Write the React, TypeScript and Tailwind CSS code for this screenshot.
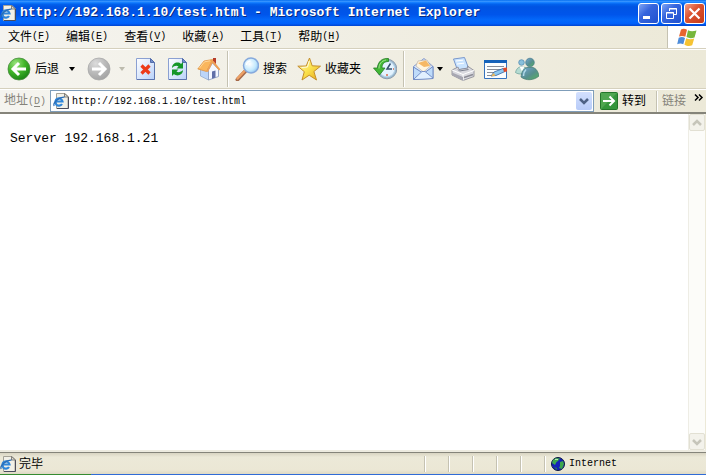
import type { ReactNode } from "react";

const menuItems = [
  { label: "文件", accessKey: "F" },
  { label: "编辑", accessKey: "E" },
  { label: "查看", accessKey: "V" },
  { label: "收藏", accessKey: "A" },
  { label: "工具", accessKey: "T" },
  { label: "帮助", accessKey: "H" },
];

const pageUrl = "http://192.168.1.10/test.html";

function Latin({ children }: { children: ReactNode }) {
  return <span className="font-['Liberation_Mono',monospace] text-[10px]">{children}</span>;
}

function Icon({ children, className = "size-6" }: { children: ReactNode; className?: string }) {
  return (
    <svg viewBox="0 0 24 24" className={`shrink-0 ${className}`} aria-hidden="true">
      {children}
    </svg>
  );
}

function PageIcon() {
  return (
    <svg viewBox="0 0 16 16" className="size-4 shrink-0" aria-hidden="true">
      <path d="M3.500.5h8.500l3 3v12h-11.500z" fill="#f1f0e8" stroke="#a5a297" />
      <path d="M15.500 4v11.500H4" fill="none" stroke="#4b4c5c" />
      <path d="M11.500.5v3.500h4z" fill="#dedbd0" stroke="#6c6a66" strokeWidth=".8" />
      <path d="M3 8.500h6.500A3.600 3.600 0 1 0 9 11" fill="none" stroke="#2f86da" strokeWidth="2.200" />
      <path d="M1.200 13C-.5 10.500 5.500 3.800 11.500 4.200" fill="none" stroke="#2b6cb4" strokeWidth="1.200" />
    </svg>
  );
}

function ArrowIcon({ disabled = false }: { disabled?: boolean }) {
  const id = disabled ? "forward-fill" : "back-fill";
  return (
    <Icon>
      <defs>
        <radialGradient id={id} cx=".35" cy=".25" r=".8">
          <stop offset="0" stopColor={disabled ? "#dcdcdc" : "#9be37f"} />
          <stop offset=".5" stopColor={disabled ? "#bcbcbc" : "#43b62b"} />
          <stop offset="1" stopColor={disabled ? "#a2a2a2" : "#188313"} />
        </radialGradient>
      </defs>
      <circle cx="12" cy="12" r="11" fill={`url(#${id})`} stroke={disabled ? "#aaa" : "#4a8c40"} strokeWidth=".8" />
      <path
        d={disabled ? "M5 12H17.500M12 6l6 6-6 6" : "M19 12H6.500M12 6l-6 6 6 6"}
        fill="none"
        stroke="#fff"
        strokeWidth="3"
      />
    </Icon>
  );
}

function SheetShape() {
  return (
    <>
      <defs>
        <linearGradient id="sheet" x2="1" y2="1">
          <stop stopColor="#fff" />
          <stop offset="1" stopColor="#b9d2fa" />
        </linearGradient>
      </defs>
      <path d="M3.500 1.500h14l4 4v17h-18z" fill="url(#sheet)" stroke="#8ba0d2" />
      <path d="M21.500 6v16.500H4" fill="none" stroke="#5c74ae" />
      <path d="M17.500 1.500v4h4z" fill="#6f8ccc" stroke="#536caa" />
    </>
  );
}

function HomeIcon() {
  return (
    <Icon>
      <path d="M3.500 12v7l8 4V11z" fill="#bcd5f8" stroke="#8da3c8" strokeWidth=".7" />
      <path d="m15.500 6 6 6.500v7L11.500 23V12.500z" fill="#f3f7ff" stroke="#8297bf" strokeWidth=".8" />
      <path d="M15 14.500 18.500 13.500v7L15 21.700z" fill="#5f6fa8" />
      <path d="M.8 12 7 4l8.500-1.500L9.500 14.500z" fill="#fab65c" stroke="#dc8b38" strokeWidth=".7" />
      <path d="m9.500 14.500 6-12 7.800 9.700-1.300 1.300-6.500-7.500-4.500 9z" fill="#f0a055" />
      <path d="M16 1h3v6l-3-3.500z" fill="#b63c2a" />
      <path d="m2.500 11 5-6.200 5.500-1" fill="none" stroke="#ffd79a" />
    </Icon>
  );
}

function SearchIcon() {
  return (
    <Icon>
      <defs>
        <radialGradient id="lens" cx=".4" cy=".4" r=".7">
          <stop stopColor="#fff" />
          <stop offset=".6" stopColor="#c4e9fd" />
          <stop offset="1" stopColor="#80b8ec" />
        </radialGradient>
      </defs>
      <path d="m10 14.500-7.500 8" stroke="#a5694a" strokeWidth="4" strokeLinecap="round" />
      <path d="m9.500 14-7 7.500" stroke="#eda064" strokeWidth="2.500" strokeLinecap="round" />
      <circle cx="16" cy="8.500" r="7.500" fill="url(#lens)" stroke="#86a9dc" strokeWidth="1.500" />
      <path d="M11.500 8a4.500 4.500 0 0 1 4-4" fill="none" stroke="#fff" strokeWidth="1.500" />
    </Icon>
  );
}

function StarIcon() {
  return (
    <Icon>
      <defs>
        <linearGradient id="star" x2="1" y2="1">
          <stop stopColor="#fffbc2" />
          <stop offset=".5" stopColor="#fbe34f" />
          <stop offset="1" stopColor="#e6a517" />
        </linearGradient>
      </defs>
      <path
        d="m12.500 1 2.700 7.800 8.300.4-6.600 5.300 2.600 8.500-7.300-4.800L5 23l2.300-8.300L.8 9.200l8.400-.2z"
        fill="url(#star)"
        stroke="#c48e2c"
      />
      <path d="m12.200 4-1.700 6-6 .5" fill="none" stroke="#fffce0" />
    </Icon>
  );
}

function HistoryIcon() {
  return (
    <Icon>
      <circle cx="14" cy="12" r="9.800" fill="#9dbbd3" stroke="#8d9dac" />
      <circle cx="14" cy="12" r="7.800" fill="#e4f3ff" stroke="#b9d7e9" />
      <path d="M17.500 6.500 14 12h5" fill="none" stroke="#34516d" strokeWidth="1.500" />
      <path d="M14 17v2m6-7h1" stroke="#d76b4c" strokeWidth="1.500" />
      <path d="M15.500 1.500C9 1 5 4.500 4.500 11H.5l6 7 5.500-7H9c0-4 2-6.500 6.500-6.500z" fill="#42b735" stroke="#247c25" strokeWidth=".8" />
      <path d="M6 11.500C6 7 8.500 3.800 13 3" fill="none" stroke="#a0e68b" />
    </Icon>
  );
}

function MailIcon() {
  return (
    <Icon>
      <path d="M2.500 9.500 13 1.500l9 8v12l-19.500 1z" fill="#d6e7fd" stroke="#8398cc" />
      <path d="m5 9 2-5 9-1 3.500 6-7 6z" fill="#fff5df" stroke="#b9a99a" strokeWidth=".6" />
      <path d="m7 6 8-2.500L19 9l-6 1z" fill="#f6b864" />
      <path d="m2.500 10 10 6.500L22 9.500v12l-19.500 1z" fill="#bedbfa" stroke="#718bc4" />
      <path d="m3 22 8-7.500h3L22 21" fill="#e1f0ff" stroke="#7892ca" />
    </Icon>
  );
}

function PrinterIcon() {
  return (
    <Icon>
      <path d="m2.500 2 11-1.500 4 10.500-11 2z" fill="#cae4ff" stroke="#7997cb" />
      <path d="m5 4 7-.8M6 7l7-.8" stroke="#fff" />
      <path d="m1 13 6-3 1 2.500 9-1.500-.5-2 6.500 4.500v6L12 23.500 1 18z" fill="#d9d9df" stroke="#85858f" strokeWidth=".8" />
      <path d="m1 13 11 4.500L23 13.500M12 17.500v6" fill="none" stroke="#fff" />
      <path d="M1 15.500 12 20v3.500L1 18z" fill="#a7a7b2" />
      <path d="m13 20.500 9-3" stroke="#8c8c96" strokeWidth="1.500" />
      <path d="m7 12.500 1.500 1.500 9-1.500" fill="none" stroke="#7c8190" />
    </Icon>
  );
}

function EditIcon() {
  return (
    <Icon>
      <path d="M1.500 3.500h22v18h-22z" fill="#fafdff" stroke="#3472be" />
      <path d="M1 3h23v3H1z" fill="#1462ba" />
      <path d="M4 9.500h17M4 12.500h15M4 15.500h9M4 18.500h4" stroke="#888e99" />
      <path d="m8 19 3-4 9-3.500 2 3-9 4z" fill="#8dc8f1" stroke="#33639e" strokeWidth=".8" />
      <path d="m8 19.500 2.500-3.500 2 2.500z" fill="#f0b653" />
      <path d="m20 11 4-.5v4l-3 .5z" fill="#dd4b2c" />
    </Icon>
  );
}

function MessengerIcon() {
  return (
    <Icon>
      <defs>
        <linearGradient id="buddy" x2="1" y2="1">
          <stop stopColor="#76a5d5" />
          <stop offset=".55" stopColor="#568f8e" />
          <stop offset="1" stopColor="#56b35c" />
        </linearGradient>
      </defs>
      <circle cx="6.500" cy="5.500" r="2.800" fill="#89bfdc" stroke="#4d86ae" strokeWidth=".7" />
      <path d="M6 9.500c-4 1-5 4-5.500 6 3 2 7 2 10 0v-5z" fill="#b5dbd2" stroke="#669c95" strokeWidth=".7" />
      <path d="m4.500 9.500 2.500 5 2.500-5z" fill="#fff" />
      <path d="M12 10.500c-4 1-5.500 5.500-6 9.500 5 4 13 3.500 18-1-1-5-3-7.500-6-8.500z" fill="url(#buddy)" stroke="#40796f" strokeWidth=".7" />
      <circle cx="15" cy="5.500" r="4.300" fill="url(#buddy)" stroke="#45788b" strokeWidth=".7" />
      <path d="M11 12.500c-2 2-2.500 4-2.500 6.500" fill="none" stroke="#b2dce9" strokeWidth="1.500" />
    </Icon>
  );
}

function WindowsFlag() {
  return (
    <svg viewBox="0 0 20 19" className="h-[19px] w-5" aria-hidden="true">
      <path d="M4 1.500C6.500.3 8 .8 10 1.800L8.300 8.800c-2-1-4-1.300-6.300-.2z" fill="#e8652e" />
      <path d="M11 2.300c2.500 1.300 5 1.300 8.500.2l-2 7c-3 1-5.500.9-8-.4z" fill="#76b73b" />
      <path d="M1.700 9.700c2.500-1 4.500-.8 6.300.2l-1.700 6.300c-2-1-4-1-6.100 0z" fill="#4d8cda" />
      <path d="M9.200 10.300c2.500 1.300 5 1.300 8 .3l-2 6.700c-3 1.200-5 .8-7.800-.6z" fill="#f6c332" />
    </svg>
  );
}

function GlobeIcon() {
  return (
    <svg viewBox="0 0 14 14" className="size-3.5 shrink-0" aria-hidden="true">
      <circle cx="7" cy="7" r="6.500" fill="#1420b8" stroke="#0b173d" />
      <path d="m2 3 3-2 4 .5L7 4 5.500 5 4 8 1 6z" fill="#3da64c" />
      <path d="m9 5 3-1 1 3-2 5-3-1 1-2z" fill="#3da64c" />
      <path d="m3 10 3 1v2z" fill="#2c8048" />
      <path d="M4 2.500h3" stroke="#b8e8b5" />
    </svg>
  );
}

function Caret({ disabled = false }: { disabled?: boolean }) {
  return (
    <svg viewBox="0 0 6 4" className={`h-1 w-1.5 shrink-0 ${disabled ? "fill-[#bdbbae]" : "fill-black"}`} aria-hidden="true">
      <path d="M0 0h6L3 4z" />
    </svg>
  );
}

function Chevron({ up = false }: { up?: boolean }) {
  return (
    <svg viewBox="0 0 10 8" className="h-2 w-2.5" fill="none" stroke="currentColor" strokeWidth="2.500" aria-hidden="true">
      <path d={up ? "m1 6 4-4 4 4" : "m1 2 4 4 4-4"} />
    </svg>
  );
}

function Separator() {
  return <div className="mx-1.5 h-9 w-0.5 shrink-0 border-l border-[#c5c2b2] bg-white" />;
}

function TitleBar() {
  const control = "flex size-[21px] items-center justify-center rounded-[3px] border border-white";
  return (
    <header className="flex h-[26px] items-center bg-[linear-gradient(#0870f0_0%,#3593ff_6%,#127dff_10%,#0262ee_16%,#0054e3_26%,#0055eb_56%,#0368fa_76%,#0061fc_90%,#0144d0_100%)] pr-px">
      <PageIcon />
      <h1 className="ml-1 flex-1 truncate font-['Liberation_Mono',monospace] text-[13px] leading-5 font-bold text-white [text-shadow:1px_1px_#072a80]">
        {pageUrl} - Microsoft Internet Explorer
      </h1>
      <div className="flex gap-0.5">
        <button aria-label="最小化" className={`${control} bg-[linear-gradient(135deg,#7ea5f5,#3665dd_40%,#2051cf)]`}>
          <svg viewBox="0 0 19 19" className="size-[19px]" aria-hidden="true">
            <path d="M4 12h7v3H4z" fill="#fff" />
          </svg>
        </button>
        <button aria-label="还原" className={`${control} bg-[linear-gradient(135deg,#7ea5f5,#3665dd_40%,#2051cf)]`}>
          <svg viewBox="0 0 19 19" className="size-[19px]" fill="none" stroke="#fff" aria-hidden="true">
            <path d="M7.500 7V4.500h7v6H12M7 5h8M4.500 8.500h7v6h-7zM4 9h8" />
          </svg>
        </button>
        <button aria-label="关闭" className={`${control} bg-[linear-gradient(135deg,#f2a08a,#dd5533_40%,#c53a18)]`}>
          <svg viewBox="0 0 19 19" className="size-[19px]" stroke="#fff" strokeWidth="2.200" aria-hidden="true">
            <path d="m4.500 4.500 10 10m0-10-10 10" />
          </svg>
        </button>
      </div>
    </header>
  );
}

function MenuBar() {
  return (
    <nav className="flex h-[23px] items-stretch border-b border-[#d5d0bd]">
      {menuItems.map((item) => (
        <button key={item.accessKey} className="flex items-center px-2 leading-4 whitespace-nowrap">
          {item.label}
          <Latin>
            (<u className="underline-offset-2">{item.accessKey}</u>)
          </Latin>
        </button>
      ))}
      <div className="ml-auto flex w-[39px] items-center justify-center border-l border-[#c5c2b2] bg-white">
        <WindowsFlag />
      </div>
    </nav>
  );
}

function Toolbar() {
  return (
    <div className="flex h-10 items-center border-t border-b border-t-white border-b-[#d5d0bd] pl-[7px]">
      <button className="flex items-center gap-1 whitespace-nowrap">
        <ArrowIcon />
        后退
      </button>
      <button aria-label="后退历史" className="ml-2.5">
        <Caret />
      </button>
      <button aria-label="前进" className="ml-3" disabled>
        <ArrowIcon disabled />
      </button>
      <button aria-label="前进历史" className="mx-2" disabled>
        <Caret disabled />
      </button>
      <div className="flex gap-2">
        <button aria-label="停止">
          <Icon>
            <SheetShape />
            <path d="m8.500 8.500 8 8m0-8-8 8" stroke="#ed3b19" strokeWidth="3.200" />
          </Icon>
        </button>
        <button aria-label="刷新">
          <Icon>
            <SheetShape />
            <path d="M7 11c0-5 6-7 9-4l2-2v6.500h-6.500l2-2C11.500 8 9 9 7 11z" fill="#159629" />
            <path d="M18 13c0 5-6 7-9 4l-2 2v-6.500h6.500l-2 2c2 1.500 4.500.5 6.500-1.500z" fill="#159629" />
          </Icon>
        </button>
        <button aria-label="主页">
          <HomeIcon />
        </button>
      </div>
      <Separator />
      <button className="flex items-center gap-1 whitespace-nowrap">
        <SearchIcon />
        搜索
      </button>
      <button className="mx-2.5 flex items-center gap-1 whitespace-nowrap">
        <StarIcon />
        收藏夹
      </button>
      <button aria-label="历史" className="ml-0.5">
        <HistoryIcon />
      </button>
      <Separator />
      <button aria-label="邮件" className="flex items-center gap-0.5">
        <MailIcon />
        <Caret />
      </button>
      <div className="ml-2 flex gap-2">
        <button aria-label="打印">
          <PrinterIcon />
        </button>
        <button aria-label="编辑">
          <EditIcon />
        </button>
        <button aria-label="Messenger">
          <MessengerIcon />
        </button>
      </div>
    </div>
  );
}

function AddressBar() {
  return (
    <form className="flex h-[25px] items-center border-t border-b-2 border-t-white border-b-[#85847a]" onSubmit={(event) => event.preventDefault()}>
      <label htmlFor="address" className="w-[50px] shrink-0 pl-1 whitespace-nowrap text-[#85837a]">
        地址
        <Latin>
          (<u className="underline-offset-2">D</u>)
        </Latin>
      </label>
      <div className="flex h-[22px] min-w-0 flex-1 items-center border border-[#7f9db9] bg-white pr-px pl-0.5">
        <PageIcon />
        <input
          id="address"
          defaultValue={pageUrl}
          spellCheck={false}
          className="ml-[3px] min-w-0 flex-1 pt-0.5 font-['Liberation_Mono',monospace] text-[10px] outline-none"
        />
        <button type="button" aria-label="地址列表" className="flex h-[18px] w-4 items-center justify-center rounded-xs bg-[linear-gradient(#d3e0fe,#b7cbf8)] text-[#4d6185]">
          <Chevron />
        </button>
      </div>
      <button type="submit" className="mx-1.5 flex items-center gap-1 whitespace-nowrap">
        <svg viewBox="0 0 18 18" className="size-[18px]" aria-hidden="true">
          <rect x=".5" y=".5" width="17" height="17" rx="1" fill="#36953c" stroke="#247629" />
          <path d="M1 1h16L1 17z" fill="#6ab963" opacity=".5" />
          <path d="M3 9h11M9.500 4.500 14 9l-4.500 4.500" fill="none" stroke="#fff" strokeWidth="2" />
        </svg>
        转到
      </button>
      <div className="mr-1 ml-1 h-[21px] w-0.5 border-l border-[#c5c2b2] bg-white" />
      <span className="whitespace-nowrap text-[#85837a]">链接</span>
      <button type="button" aria-label="更多链接" className="mr-0.5 ml-2 self-start pt-1">
        <svg viewBox="0 0 10 7" className="h-[7px] w-2.5" fill="none" stroke="#000" strokeWidth="1.500" aria-hidden="true">
          <path d="m1 .5 3 3-3 3m4-6 3 3-3 3" />
        </svg>
      </button>
    </form>
  );
}

function ScrollBar() {
  const button = "flex h-[17px] w-4 items-center justify-center rounded-xs border border-[#e2e0d3] bg-[#f3f2eb] text-[#c6c5ba]";
  return (
    <div className="flex w-[18px] flex-col items-center justify-between border-r border-l border-r-[#ece9d8] border-l-[#eeede5] bg-[#fcfcf9]">
      <button aria-label="向上滚动" className={button} disabled>
        <Chevron up />
      </button>
      <button aria-label="向下滚动" className={button} disabled>
        <Chevron />
      </button>
    </div>
  );
}

function StatusBar() {
  return (
    <footer className="flex h-[25px] shrink-0 flex-col border-t-2 border-[#edebe0]">
      <div className="flex flex-1 items-center border-t border-[#85847a] bg-[linear-gradient(#d8d4c2,#ece9d8_20%,#ebe7d5_80%,#ded9c4)]">
        <PageIcon />
        <span className="ml-[3px] flex-1">完毕</span>
        <div className="flex">
          {[0, 1, 2, 3, 4].map((pane) => (
            <div key={pane} className="h-4 w-6 border-l border-[#c5c2b2] shadow-[inset_1px_0_white]" />
          ))}
        </div>
        <div className="flex h-4 w-[162px] items-center gap-1 border-l border-[#c5c2b2] pl-1.5 shadow-[inset_1px_0_white]">
          <GlobeIcon />
          <Latin>Internet</Latin>
        </div>
      </div>
      <div className="flex h-px">
        <div className="w-[91px] bg-[#358b30]" />
        <div className="flex-1 bg-[#2f6bd6]" />
      </div>
    </footer>
  );
}

export default function App() {
  return (
    <div className="flex min-h-screen flex-col bg-[#ece9d8] font-['Liberation_Sans','Noto_Sans_CJK_SC',sans-serif] text-[12px] leading-4 text-black">
      <TitleBar />
      <div className="bg-[linear-gradient(90deg,#f5f4ef,#ece9d8)]">
        <MenuBar />
        <Toolbar />
        <AddressBar />
      </div>
      <div className="flex flex-1 bg-white">
        <main className="flex-1 px-2.5 py-[15px] font-['Liberation_Mono',monospace] text-[13px] leading-5">
          <p>Server 192.168.1.21</p>
        </main>
        <ScrollBar />
      </div>
      <StatusBar />
    </div>
  );
}
